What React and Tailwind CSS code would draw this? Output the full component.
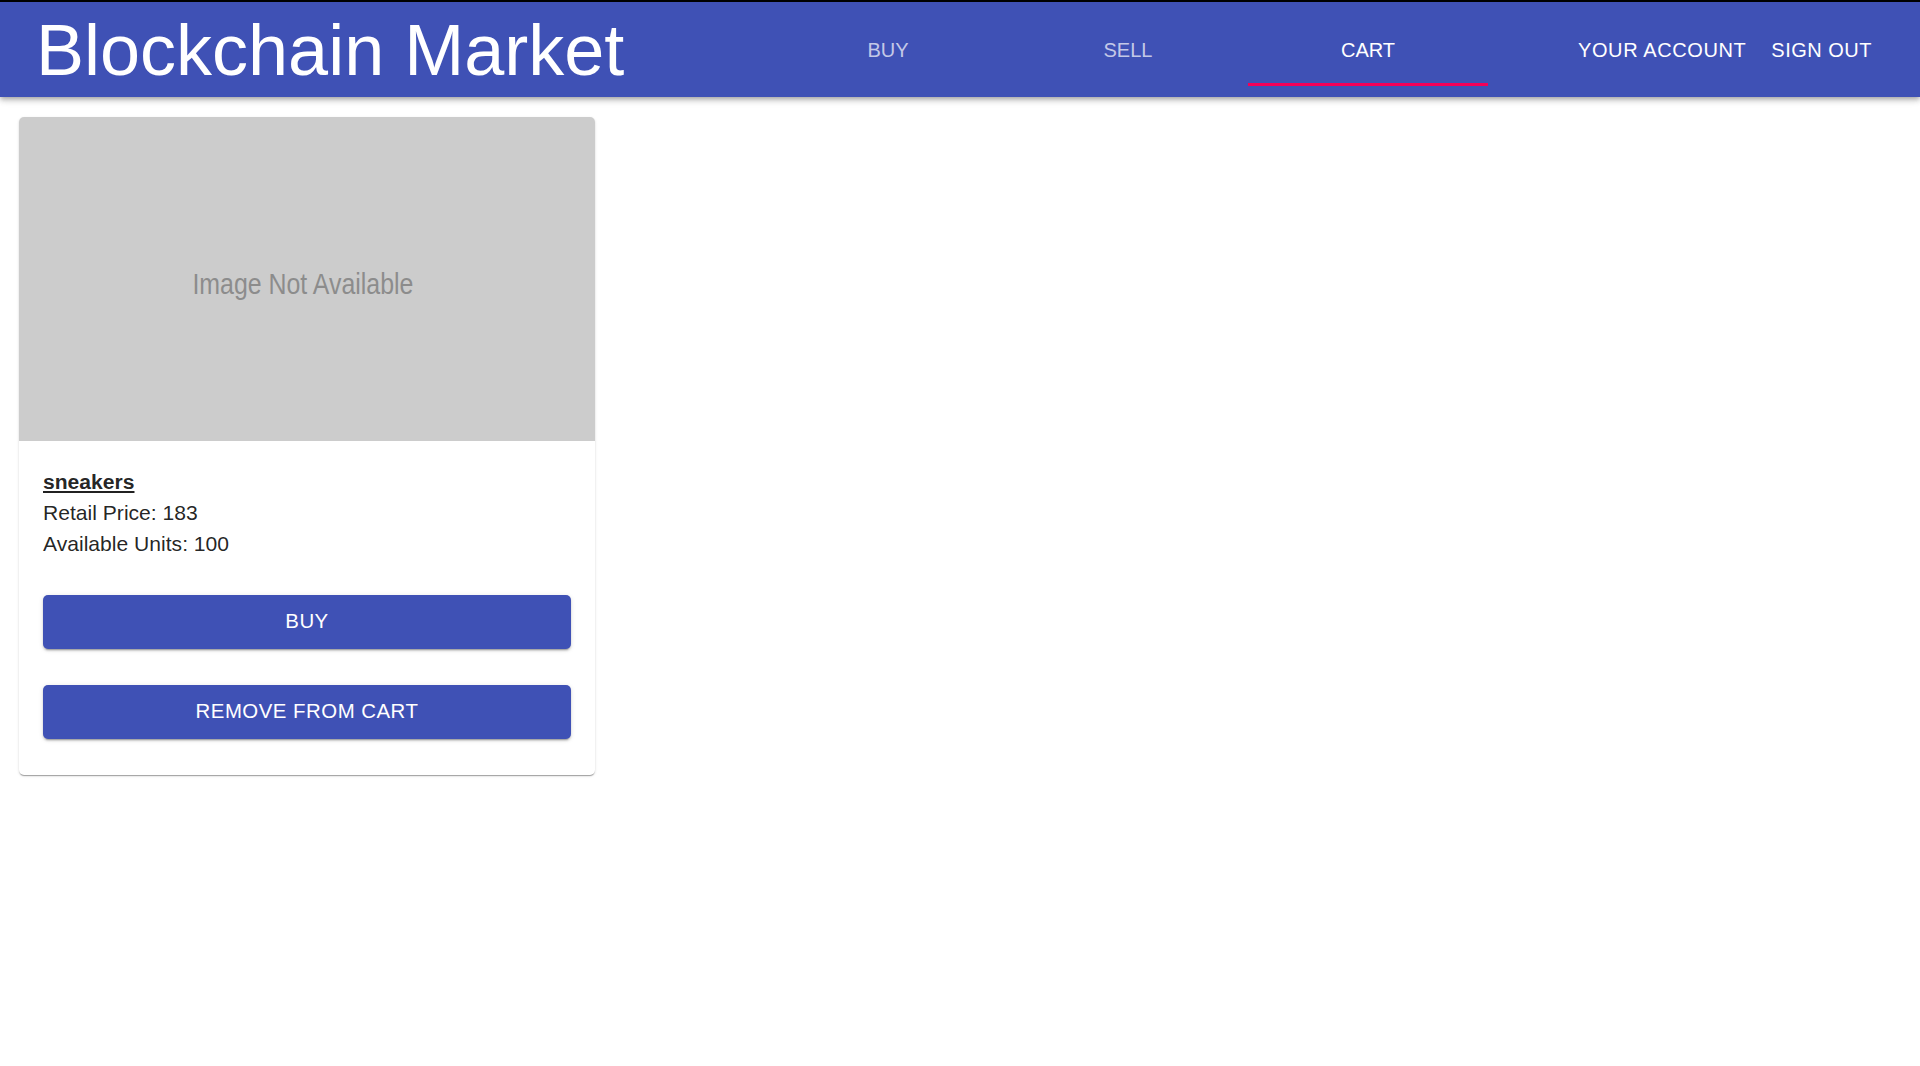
export default function App() {
  const btnShadow =
    "shadow-[0px_3px_1px_-2px_rgba(0,0,0,0.2),0px_2px_2px_0px_rgba(0,0,0,0.14),0px_1px_5px_0px_rgba(0,0,0,0.12)]";
  return (
    <div className="min-h-[1066px] bg-white font-['Liberation_Sans',Arial,sans-serif]">
      <header className="relative z-10 flex h-[97px] items-center border-t-2 border-black bg-[#3f51b5] text-white shadow-[0px_2px_4px_-1px_rgba(0,0,0,0.2),0px_4px_5px_0px_rgba(0,0,0,0.14),0px_1px_10px_0px_rgba(0,0,0,0.12)]">
        <h1 className="w-[768px] shrink-0 pl-[36px] text-[72px] leading-none font-normal">
          Blockchain Market
        </h1>
        <nav className="flex h-[72px] shrink-0">
          <div className="relative flex w-[240px] items-center justify-center text-[20px] leading-none uppercase text-white/70">
            Buy
          </div>
          <div className="relative flex w-[240px] items-center justify-center text-[20px] leading-none uppercase text-white/70">
            Sell
          </div>
          <div className="relative flex w-[240px] items-center justify-center text-[20px] leading-none uppercase text-white">
            Cart
            <span className="absolute bottom-0 left-0 h-[3px] w-full bg-[#f50057]" />
          </div>
        </nav>
        <div className="ml-auto flex items-center gap-[5px] pr-[38px]">
          <button className="px-[10px] py-[8px] text-[20px] leading-none uppercase tracking-[0.6px] text-white">
            Your Account
          </button>
          <button className="px-[10px] py-[8px] text-[20px] leading-none uppercase tracking-[0.5px] text-white">
            Sign Out
          </button>
        </div>
      </header>
      <main className="flex pt-[20px] pl-[19px]">
        <div className="w-[576px] overflow-hidden rounded-[5px] bg-white shadow-[0px_2px_1px_-1px_rgba(0,0,0,0.2),0px_1px_1px_0px_rgba(0,0,0,0.14),0px_1px_3px_0px_rgba(0,0,0,0.12)]">
          <div className="flex h-[324px] items-center justify-center bg-[#cccccc]">
            <span className="inline-block scale-x-[0.83] pt-[9px] pr-[9px] text-[30px] text-[#8c8c8c]">
              Image Not Available
            </span>
          </div>
          <div className="px-[24px] pt-[25px] pb-[36px] text-[21.1px] leading-[31.2px] text-black/[0.87]">
            <div className="font-bold underline">sneakers</div>
            <div>Retail Price: 183</div>
            <div>Available Units: 100</div>
            <button
              className={`mt-[35px] flex h-[54px] w-full items-center justify-center rounded-[5px] bg-[#3f51b5] text-[20.4px] uppercase tracking-[0.5px] text-white ${btnShadow}`}
            >
              Buy
            </button>
            <button
              className={`mt-[36px] flex h-[54px] w-full items-center justify-center rounded-[5px] bg-[#3f51b5] text-[20.4px] uppercase tracking-[0.5px] text-white ${btnShadow}`}
            >
              Remove from Cart
            </button>
          </div>
        </div>
      </main>
    </div>
  );
}
